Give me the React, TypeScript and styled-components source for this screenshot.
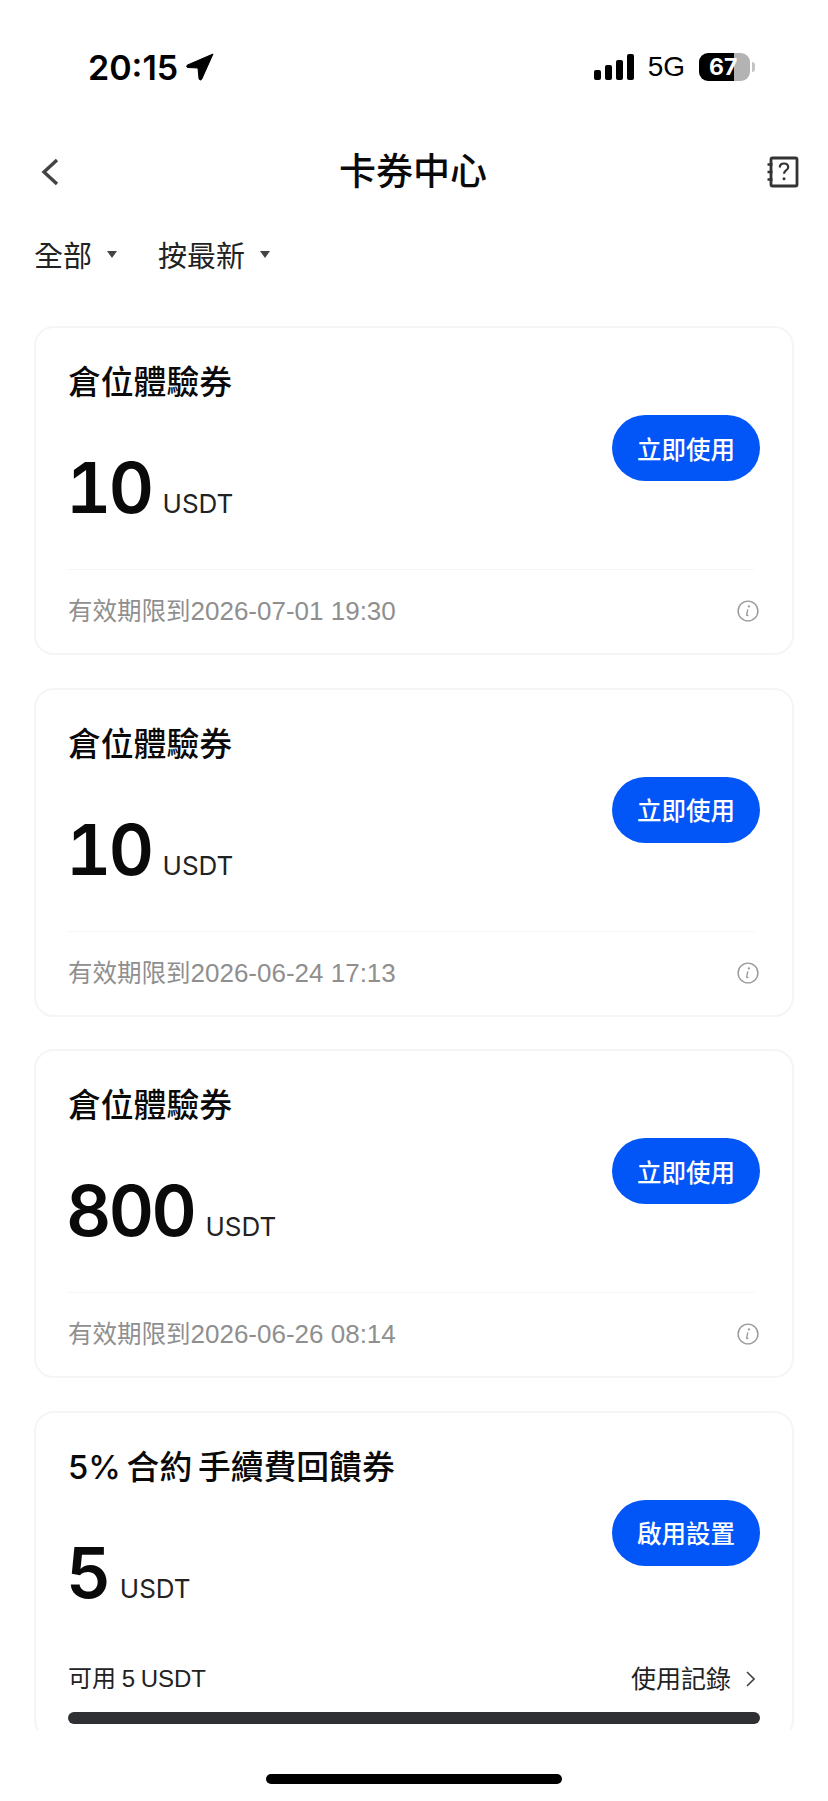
import React from 'react'
import styled, { createGlobalStyle } from 'styled-components'

const GlobalStyle = createGlobalStyle`
  html, body {
    margin: 0;
    padding: 0;
    background: #fff;
  }
  body {
    font-family: Inter, "Noto Sans CJK TC", sans-serif;
    color: #0a0a0a;
  }
  * {
    box-sizing: border-box;
  }
`

const Page = styled.div`
  width: 828px;
  height: 1801px;
  display: flex;
  flex-direction: column;
  overflow: hidden;
`

const StatusBar = styled.div`
  height: 140px;
  padding: 49px 73px 0 88px;
  display: flex;
  align-items: flex-start;
  justify-content: space-between;
`

const TimeGroup = styled.div`
  display: flex;
  align-items: center;
  gap: 8px;
  height: 36px;
  font-size: 34px;
  font-weight: 600;
  color: #000;
`

const StatusRight = styled.div`
  display: flex;
  align-items: center;
  height: 36px;
`

const Network = styled.span`
  margin: 0 14px;
  font-family: "Liberation Sans", sans-serif;
  font-size: 28px;
  color: #000;
`

const Battery = styled.div`
  width: 51px;
  height: 28px;
  border-radius: 9px;
  background: linear-gradient(90deg, #000 0 68%, #b3b3b3 68% 100%);
  color: #fff;
  font-size: 23px;
  font-weight: 700;
  line-height: 28px;
  padding-left: 10px;
`

const BatteryTip = styled.div`
  width: 3px;
  height: 10px;
  margin-left: 2px;
  border-radius: 0 3px 3px 0;
  background: #c4c4c4;
`

const NavBar = styled.div`
  height: 64px;
  padding: 0 29px 0 41px;
  display: flex;
  align-items: center;
  justify-content: space-between;
`

const Title = styled.h1`
  margin: 0;
  font-size: 37px;
  line-height: 48px;
  font-weight: 500;
  color: #0a0a0a;
`

const Filters = styled.div`
  height: 40px;
  margin-top: 30px;
  padding-left: 34px;
  display: flex;
  align-items: center;
  gap: 41px;
`

const Filter = styled.div`
  display: flex;
  align-items: center;
  gap: 15px;
  font-size: 29px;
  font-weight: 400;
  color: #222;
`

const Caret = styled.span`
  width: 0;
  height: 0;
  border-left: 5.500px solid transparent;
  border-right: 5.500px solid transparent;
  border-top: 7px solid #444;
`

const CardList = styled.div`
  height: 1404px;
  margin-top: 52px;
  padding: 0 34px;
  display: flex;
  flex-direction: column;
  gap: 32.500px;
  overflow: hidden;
`

const Card = styled.div`
  flex: none;
  height: 329px;
  padding: 32px 32px 0;
  border: 2px solid #f5f5f5;
  border-radius: 20px;
  background: #fff;
`

const CardBody = styled.div`
  display: flex;
  justify-content: space-between;
  align-items: flex-start;
`

const CardTitle = styled.div`
  font-size: 32.800px;
  line-height: 44px;
  font-weight: 500;
  word-spacing: -3px;
  color: #0a0a0a;
  white-space: nowrap;
`

const AmountRow = styled.div`
  margin-top: 48px;
  height: 72px;
  display: flex;
  align-items: baseline;
  gap: 11px;
`

const Amount = styled.span`
  margin-left: -2px;
  font-size: 70px;
  line-height: 72px;
  font-weight: 600;
  font-variant-numeric: tabular-nums;
  letter-spacing: -2.500px;
  color: #0a0a0a;
`

const Unit = styled.span`
  font-size: 26px;
  font-weight: 400;
  color: #222;
`

const UseButton = styled.div`
  width: 148px;
  height: 66px;
  margin-top: 55px;
  border-radius: 33px;
  background: #0256f7;
  color: #fff;
  font-size: 24.500px;
  font-weight: 500;
  display: flex;
  align-items: center;
  justify-content: center;
`

const Divider = styled.div`
  height: 1px;
  margin-top: 45px;
  margin-right: 6px;
  background: #f6f6f6;
`

const Footer = styled.div`
  margin-top: 21px;
  display: flex;
  align-items: center;
  justify-content: space-between;
  font-size: 24.500px;
  line-height: 40px;
  color: #8f8f8f;
`

const ExpiryDate = styled.span`
  font-family: "Liberation Sans", sans-serif;
  font-size: 26px;
`

const InfoWrap = styled.span`
  display: flex;
  margin-right: 1px;
`

const UsageRow = styled.div`
  margin-top: 52px;
  display: flex;
  align-items: center;
  justify-content: space-between;
  font-family: "Liberation Sans", "Noto Sans CJK TC", sans-serif;
  font-size: 24px;
  line-height: 36px;
  word-spacing: -1px;
  color: #222;
`

const RecordLink = styled.div`
  display: flex;
  align-items: center;
  gap: 15px;
  margin-right: 5px;
  font-size: 25px;
`

const ProgressTrack = styled.div`
  height: 12px;
  margin-top: 15px;
  border-radius: 6px;
  background: #2f3033;
`

const HomeArea = styled.div`
  flex: 1;
  display: flex;
  justify-content: center;
  padding-top: 44px;
`

const HomeIndicator = styled.div`
  width: 296px;
  height: 10px;
  border-radius: 5px;
  background: #000;
`

const LocationIcon = () => (
  <svg width="28" height="28" viewBox="0 0 28 28">
    <path d="M27 1 L1.500 12 c-1.300.6-1 2.500.5 2.500 L12 15 l1 10.500 c.2 1.800 2.200 2 2.800.5 L27 1z" fill="#000" stroke="#000" strokeWidth="1" />
  </svg>
)

const SignalIcon = () => (
  <svg width="40" height="26" viewBox="0 0 40 26">
    <rect x="0" y="16" width="7" height="10" rx="2" fill="#000" />
    <rect x="11" y="11" width="7" height="15" rx="2" fill="#000" />
    <rect x="22" y="6" width="7" height="20" rx="2" fill="#000" />
    <rect x="33" y="0" width="7" height="26" rx="2" fill="#000" />
  </svg>
)

const BackIcon = () => (
  <svg width="18" height="28" viewBox="0 0 18 28">
    <path d="M16 2 L3 14 L16 26" fill="none" stroke="#444" strokeWidth="3.400" />
  </svg>
)

const HelpBookIcon = () => (
  <svg width="32" height="32" viewBox="0 0 32 32">
    <rect x="4" y="2" width="26" height="28" rx="1.500" fill="none" stroke="#333" strokeWidth="2.800" />
    <path d="M0.500 8.500h5M0.500 16h5M0.500 23.500h5" stroke="#333" strokeWidth="2.400" />
    <path d="M12.800 11.500c0-2.500 1.700-4 4.200-4s4.200 1.500 4.200 3.700c0 3.300-4.200 3.200-4.200 6.500" fill="none" stroke="#333" strokeWidth="2.200" />
    <circle cx="17" cy="22.800" r="1.500" fill="#333" />
  </svg>
)

const InfoIcon = () => (
  <svg width="22" height="22" viewBox="0 0 20 20">
    <circle cx="10" cy="10" r="9" fill="none" stroke="#999" strokeWidth="1.300" />
    <circle cx="10.800" cy="5.800" r="1" fill="#999" />
    <path d="M9.800 8.500 L8.800 13.500 c-.1.700.5.9 1.500.3" fill="none" stroke="#999" strokeWidth="1.200" />
  </svg>
)

const ChevronIcon = () => (
  <svg width="9" height="16" viewBox="0 0 9 16">
    <path d="M1 1 L8 8 L1 15" fill="none" stroke="#444" strokeWidth="1.600" />
  </svg>
)

interface Voucher {
  title: string
  amount: string
  action: string
  expiry?: string
}

const vouchers: Voucher[] = [
  { title: '倉位體驗券', amount: '10', action: '立即使用', expiry: '2026-07-01 19:30' },
  { title: '倉位體驗券', amount: '10', action: '立即使用', expiry: '2026-06-24 17:13' },
  { title: '倉位體驗券', amount: '800', action: '立即使用', expiry: '2026-06-26 08:14' },
  { title: '5% 合約 手續費回饋券', amount: '5', action: '啟用設置' },
]

const App: React.FC = () => (
  <Page>
    <GlobalStyle />
    <StatusBar>
      <TimeGroup>
        20:15
        <LocationIcon />
      </TimeGroup>
      <StatusRight>
        <SignalIcon />
        <Network>5G</Network>
        <Battery>67</Battery>
        <BatteryTip />
      </StatusRight>
    </StatusBar>
    <NavBar>
      <BackIcon />
      <Title>卡券中心</Title>
      <HelpBookIcon />
    </NavBar>
    <Filters>
      <Filter>
        全部
        <Caret />
      </Filter>
      <Filter>
        按最新
        <Caret />
      </Filter>
    </Filters>
    <CardList>
      {vouchers.map((voucher) => (
        <Card key={`${voucher.title}-${voucher.expiry}`}>
          <CardBody>
            <div>
              <CardTitle>{voucher.title}</CardTitle>
              <AmountRow>
                <Amount>{voucher.amount}</Amount>
                <Unit>USDT</Unit>
              </AmountRow>
            </div>
            <UseButton>{voucher.action}</UseButton>
          </CardBody>
          {voucher.expiry ? (
            <>
              <Divider />
              <Footer>
                <span>
                  有效期限到
                  <ExpiryDate>{voucher.expiry}</ExpiryDate>
                </span>
                <InfoWrap>
                  <InfoIcon />
                </InfoWrap>
              </Footer>
            </>
          ) : (
            <>
              <UsageRow>
                可用 5 USDT
                <RecordLink>
                  使用記錄
                  <ChevronIcon />
                </RecordLink>
              </UsageRow>
              <ProgressTrack />
            </>
          )}
        </Card>
      ))}
    </CardList>
    <HomeArea>
      <HomeIndicator />
    </HomeArea>
  </Page>
)

export default App
